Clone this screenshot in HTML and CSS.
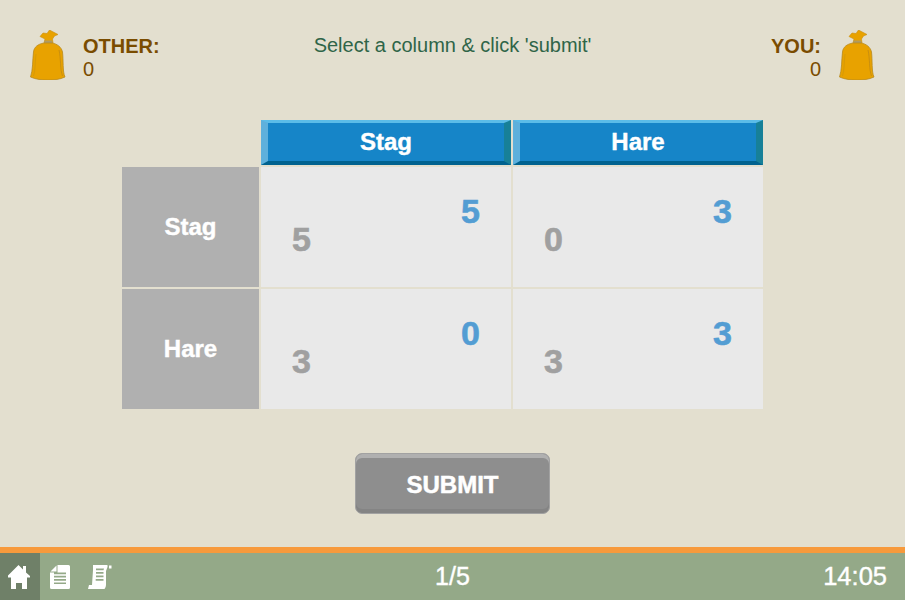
FILE: index.html
```html
<!DOCTYPE html>
<html lang="en">
<head>
<meta charset="utf-8">
<title>Stag Hunt</title>
<link rel="stylesheet" href="styles.css">
</head>
<body>
<svg class="defs" width="0" height="0" aria-hidden="true">
  <symbol id="bag" viewBox="0 0 36 50">
    <path d="M14 13 L15 9 L10 6.500 L13 3 L17 3.500 L19.500 0 L28 4.500 L24.500 6 L22.500 9 L23 13 Z" fill="#e8a200" stroke="#c98f10" stroke-width=".6"/>
    <path d="M14.500 10.500 L22 10.500 L23 13.500 L14 13.500 Z" fill="#b09a60"/>
    <path d="M14 13 C8 14 4 17 3.500 22 C2.500 30 3 40 0.500 47 C6 49.500 12 50 18 50 C24 50 30 49.500 35 47 C32.500 42 33.500 30 32.500 22 C31.500 17 27 14 22.500 13 Z" fill="#e8a200" stroke="#b88a20" stroke-width=".8"/>
    <path d="M29 20 C31 28 30 40 32.500 46" fill="none" stroke="#c98f10" stroke-width="1"/>
    <path d="M6 24 C5 32 5.500 40 3.500 46" fill="none" stroke="#d69a08" stroke-width="1"/>
  </symbol>
</svg>
<div class="page">
  <header class="top">
    <div class="player">
      <svg class="bag"><use href="#bag"/></svg>
      <div class="score"><b>OTHER:</b><span>0</span></div>
    </div>
    <div class="prompt">Select a column &amp; click 'submit'</div>
    <div class="player you">
      <div class="score right"><b>YOU:</b><span>0</span></div>
      <svg class="bag"><use href="#bag"/></svg>
    </div>
  </header>
  <main class="content">
    <div class="matrix">
      <div class="blank"></div>
      <div class="colhead">Stag</div>
      <div class="colhead">Hare</div>
      <div class="rowhead">Stag</div>
      <div class="cell"><span class="pay them">5</span><span class="pay me">5</span></div>
      <div class="cell"><span class="pay them">3</span><span class="pay me">0</span></div>
      <div class="rowhead">Hare</div>
      <div class="cell"><span class="pay them">0</span><span class="pay me">3</span></div>
      <div class="cell"><span class="pay them">3</span><span class="pay me">3</span></div>
    </div>
    <button class="submit" type="button">SUBMIT</button>
  </main>
  <footer class="bar">
    <div class="tools">
      <div class="tool active">
        <svg width="22" height="24" viewBox="0 0 22 24"><path fill-rule="evenodd" d="M0 10.500 L10.500 0 L15 4.500 L15 1 L18 1 L18 7.500 L22 11 L22 12.500 L19 12.500 L19 24 L14 24 L14 18 L8 18 L8 24 L3 24 L3 12.500 L0 12.500 Z" fill="#fff"/></svg>
      </div>
      <div class="tool">
        <svg width="20" height="24" viewBox="0 0 20 24"><path fill-rule="evenodd" d="M7.500 0 L18.500 0 Q20 0 20 1.500 L20 22.500 Q20 24 18.500 24 L1.500 24 Q0 24 0 22.500 L0 7.500 L7.500 7.500 Z M4 7.500 L16 7.500 L16 9.200 L4 9.200 Z M4 10.800 L16 10.800 L16 12.500 L4 12.500 Z M4 14.100 L16 14.100 L16 15.800 L4 15.800 Z M4 17.400 L16 17.400 L16 19.100 L4 19.100 Z" fill="#fff"/><path d="M6.500 0.500 L6.500 6.500 L0.500 6.500 Z" fill="#fff"/></svg>
      </div>
      <div class="tool scroll">
        <svg width="24" height="24" viewBox="0 0 24 24"><path fill-rule="evenodd" d="M5 0 L19 0 Q20 0 19.500 2 L18 6 L18 20 Q18 22 16.500 24 L0 24 L1 20 L4 20 L5 5 Z M8 3.500 L16 3.500 L15.500 5.200 L8 5.200 Z M8 7 L15.500 7 L15.500 8.700 L8 8.700 Z M8 10.500 L15.500 10.500 L15.500 12.200 L8 12.200 Z M7.700 14 L15.500 14 L15.500 15.700 L7.700 15.700 Z" fill="#fff"/><rect x="21" y="0.500" width="2.500" height="3" fill="#fff"/></svg>
      </div>
    </div>
    <div class="round">1/5</div>
    <div class="clock">14:05</div>
  </footer>
</div>
</body>
</html>
```
FILE: styles.css
```css
* { box-sizing: border-box; }
html, body { margin: 0; height: 100%; }
body {
  background: #e3dfcf;
  font-family: "Liberation Sans", Arial, sans-serif;
  overflow: hidden;
}
.defs { position: absolute; }
.page { height: 600px; display: flex; flex-direction: column; }
.top {
  height: 120px;
  padding: 30px 30px 0 30px;
  display: flex;
  justify-content: space-between;
  align-items: flex-start;
  position: relative;
}
.player { display: flex; gap: 17px; width: 200px; }
.player.you { justify-content: flex-end; gap: 18px; }
.bag { width: 36px; height: 50px; flex: none; }
.score { display: flex; flex-direction: column; padding-top: 5px; font-size: 20px; line-height: 23px; color: #7a4c00; }
.score.right { align-items: flex-end; }
.score b { font-weight: 700; }
.prompt { font-size: 20px; line-height: 23px; color: #2f6548; padding-top: 4px; text-align: center; flex: 1; }
.content { flex: 1; display: flex; flex-direction: column; padding-left: 122px; }
.matrix {
  display: grid;
  grid-template-columns: 137px 250px 250px;
  grid-template-rows: 45px 120px 120px;
  gap: 2px;
}
.colhead {
  display: flex; align-items: center; justify-content: center;
  background: #1685c8;
  border-style: solid;
  border-width: 3px 7px 4px 7px;
  border-color: #5bbce8 #178098 #00628f #5eb0dc;
  color: #fff;
  font-size: 24px; font-weight: 700;
  -webkit-text-stroke: .4px #fff;
}
.rowhead {
  display: flex; align-items: center; justify-content: center;
  background: #b0b0b0;
  color: #fff;
  font-size: 24px; font-weight: 700;
  -webkit-text-stroke: .4px #fff;
}
.cell { background: #e9e9e9; position: relative; }
.pay { position: absolute; font-size: 34px; font-weight: 700; line-height: 40px; -webkit-text-stroke: .6px currentColor; }
.pay.them { color: #539dd3; right: 31px; top: 24px; }
.pay.me { color: #a0a0a0; left: 31px; top: 52px; }
.submit {
  align-self: flex-start;
  margin: 44px 0 0 233px;
  width: 195px; height: 61px;
  background: #8e8e8e;
  border: 1px solid #a2a2a2;
  border-radius: 7px;
  box-shadow: inset 0 4px 0 #b0b0b0, inset 0 -4px 0 #848484;
  color: #fff;
  font: 700 24px "Liberation Sans", Arial, sans-serif;
  -webkit-text-stroke: .5px #fff;
  padding: 2px 0 0 0;
}
.bar {
  height: 53px;
  background: #94a988;
  border-top: 6px solid #f79a3c;
  display: flex;
  align-items: stretch;
  position: relative;
  color: #fff;
  font-size: 25px;
  -webkit-text-stroke: .4px #fff;
}
.tools { display: flex; position: relative; z-index: 1; }
.tool { display: flex; align-items: center; justify-content: center; height: 100%; }
.tool.active { width: 40px; background: #6f8068; padding-right: 2px; }
.tool:nth-child(2) { margin-left: 10px; width: 20px; }
.tool.scroll { margin-left: 18px; width: 24px; }
.round { position: absolute; left: 0; right: 0; top: 0; bottom: 0; display: flex; align-items: center; justify-content: center; }
.clock { margin-left: auto; padding-right: 18px; display: flex; align-items: center; font-size: 25.500px; }
```
